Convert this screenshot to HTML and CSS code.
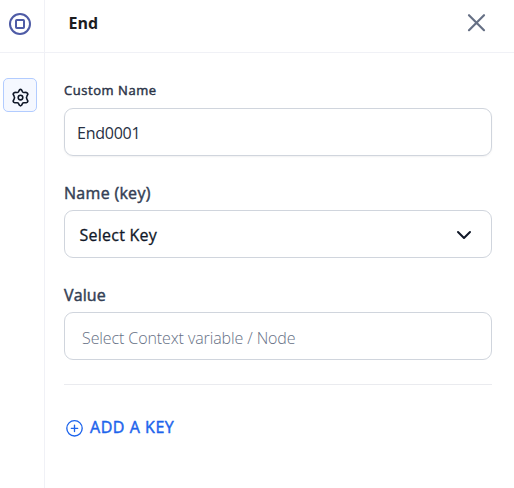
FILE: index.html
```html
<!DOCTYPE html>
<html lang="en">
<head>
<meta charset="utf-8">
<title>End</title>
<link rel="stylesheet" href="styles.css">
</head>
<body>
<div class="panel">
  <header class="header">
    <div class="node-icon">
      <svg width="24" height="24" viewBox="0 0 24 24" fill="none" stroke="#4e5ba6" stroke-width="2"><circle cx="12" cy="12" r="10"/><rect x="8" y="8" width="8" height="8" rx="0.8"/></svg>
    </div>
    <h1 class="title">End</h1>
    <button class="close" aria-label="Close">
      <svg width="18" height="18" viewBox="0 0 18 18" fill="none" stroke="#667085" stroke-width="2.2" stroke-linecap="round"><path d="M1 1.2l15 15M16 1.2l-15 15"/></svg>
    </button>
  </header>
  <div class="body">
    <nav class="rail">
      <button class="tab" aria-label="Settings">
        <svg width="20" height="20" viewBox="0 0 20 20" fill="none" stroke="#101828" stroke-width="1.6" stroke-linejoin="round"><g transform="translate(.5 .6)"><path d="M9 2.3Q10 1.3 11 2.3L12.1 4.3Q12.6 5 13.5 4.9L15.7 4.8Q17.2 5.2 17.4 6.5L16.3 8.7Q15.6 10 16.3 11.3L17.4 13.5Q17.2 14.8 15.7 15.2L13.5 15.1Q12.6 15 12.1 15.7L11 17.7Q10 18.7 9 17.7L7.9 15.7Q7.4 15 6.5 15.1L4.3 15.2Q2.8 14.8 2.6 13.5L3.7 11.3Q4.4 10 3.7 8.7L2.6 6.5Q2.8 5.2 4.3 4.8L6.5 4.9Q7.4 5 7.9 4.3Z"/><circle cx="10" cy="10" r="2.3"/></g></svg>
      </button>
    </nav>
    <main class="form">
      <label class="label small">Custom Name</label>
      <div class="field raised"><span class="value">End0001</span></div>
      <label class="label"><span class="name">Name (key)</span></label>
      <div class="field select"><span class="choice">Select Key</span>
        <svg width="16" height="10" viewBox="0 0 16 10" fill="none" stroke="#101828" stroke-width="2" stroke-linecap="round" stroke-linejoin="round"><path d="M2 2l6 6 6-6"/></svg>
      </div>
      <label class="label"><span class="val">Value</span></label>
      <div class="field context"><span class="placeholder">Select Context variable / Node</span></div>
      <hr class="divider">
      <button class="add">
        <svg width="18" height="18" viewBox="0 0 18 18" fill="none" stroke="#1d64ec" stroke-width="1.35" stroke-linecap="round"><circle cx="8.5" cy="10.3" r="7.7"/><path d="M8.5 7.1v6.4M5.3 10.3h6.4"/></svg>
        <span>ADD A KEY</span>
      </button>
    </main>
  </div>
</div>
</body>
</html>
```
FILE: styles.css
```css
* { box-sizing: border-box; }
body { margin: 0; background: #fff; color: #101828; font: 16px/24px "Open Sans", "Noto Sans", sans-serif; }
button { border: 0; padding: 0; background: none; font: inherit; }
svg { display: block; flex: none; overflow: visible; }
.panel { height: 488px; display: flex; flex-direction: column; overflow: hidden; }
.header { height: 53px; flex: none; display: flex; border-bottom: 1px solid #f0f1f6; }
.node-icon { width: 45px; padding: 12px 0 0 8px; border-right: 1px solid #f0f1f6; }
.title { flex: 1; margin: 0; padding: 11px 0 0 23.5px; font-size: 16px; line-height: 24px; font-weight: 700; color: #1d1d1f; }
.close { width: 18px; height: 18px; margin: 14px 28px 0 0; }
.body { flex: 1; display: flex; }
.rail { width: 45px; padding: 25px 0 0 3px; border-right: 1px solid #f0f1f6; }
.tab { width: 34px; height: 34px; padding: 3px 0 0 6px; border: 1px solid #b2ccff; border-radius: 5px; background: #f5f8ff; }
.form { flex: 1; padding: 25px 22px 0 19px; display: flex; flex-direction: column; }
.label { height: 30px; padding-top: 1px; color: #344054; white-space: nowrap; -webkit-text-stroke: 0.45px currentColor; }
.label.small { padding-top: 0; font-size: 13px; color: #2b3448; letter-spacing: 0.55px; }
.name { letter-spacing: 0.3px; }
.val { letter-spacing: 0.1px; }
.field { height: 48px; display: flex; align-items: center; border: 1px solid #d0d5dd; border-radius: 9px; padding: 0 12px; margin-bottom: 24px; white-space: nowrap; }
.field.raised { padding-top: 2px; box-shadow: 0 1px 2px rgba(16,24,40,.06); }
.value { color: #273043; letter-spacing: -0.25px; }
.select { justify-content: space-between; padding: 2px 19px 0 14.5px; }
.choice { letter-spacing: 0.25px; -webkit-text-stroke: 0.3px currentColor; }
.context { padding: 4px 17px 0; }
.placeholder { font-weight: 300; color: #667085; letter-spacing: -0.1px; }
.divider { width: 100%; height: 1px; margin: 0; border: 0; background: #eaebef; }
.add { display: flex; align-items: center; gap: 6px; margin: 30px 0 0 2px; color: #1d64ec; letter-spacing: 0.55px; white-space: nowrap; -webkit-text-stroke: 0.45px currentColor; }
```
